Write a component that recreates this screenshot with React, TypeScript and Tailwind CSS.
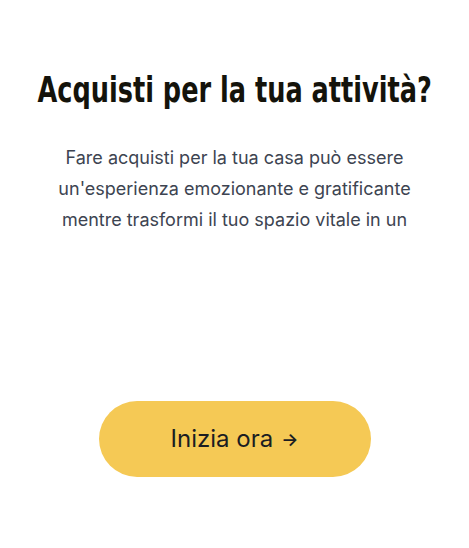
import React from 'react';

export default function App() {
  return (
    <div className="min-h-screen w-full bg-white flex flex-col items-center pt-[66px]">
      <h1 className="h-[48px] flex items-center justify-center whitespace-nowrap">
        <span className="inline-block scale-x-[0.79] text-[36px] leading-[48px] font-bold text-[#14130b] [font-stretch:condensed] [font-family:'DejaVu_Sans',sans-serif]">
          Acquisti per la tua attività?
        </span>
      </h1>
      <p className="mt-[28px] h-[93px] w-[400px] text-center text-[18px] leading-[31px] text-[#3d4451] [font-family:Inter,sans-serif]">
        Fare acquisti per la tua casa può essere un'esperienza emozionante e gratificante mentre trasformi il tuo spazio vitale in un
      </p>
      <button className="mt-[166px] w-[272px] h-[76px] rounded-full bg-[#f5c955] flex items-center justify-center gap-2 text-[24px] text-[#1b1d22] [font-family:Inter,sans-serif]">
        <span>Inizia ora</span>
        <span className="text-[18px] font-semibold">→</span>
      </button>
    </div>
  );
}
